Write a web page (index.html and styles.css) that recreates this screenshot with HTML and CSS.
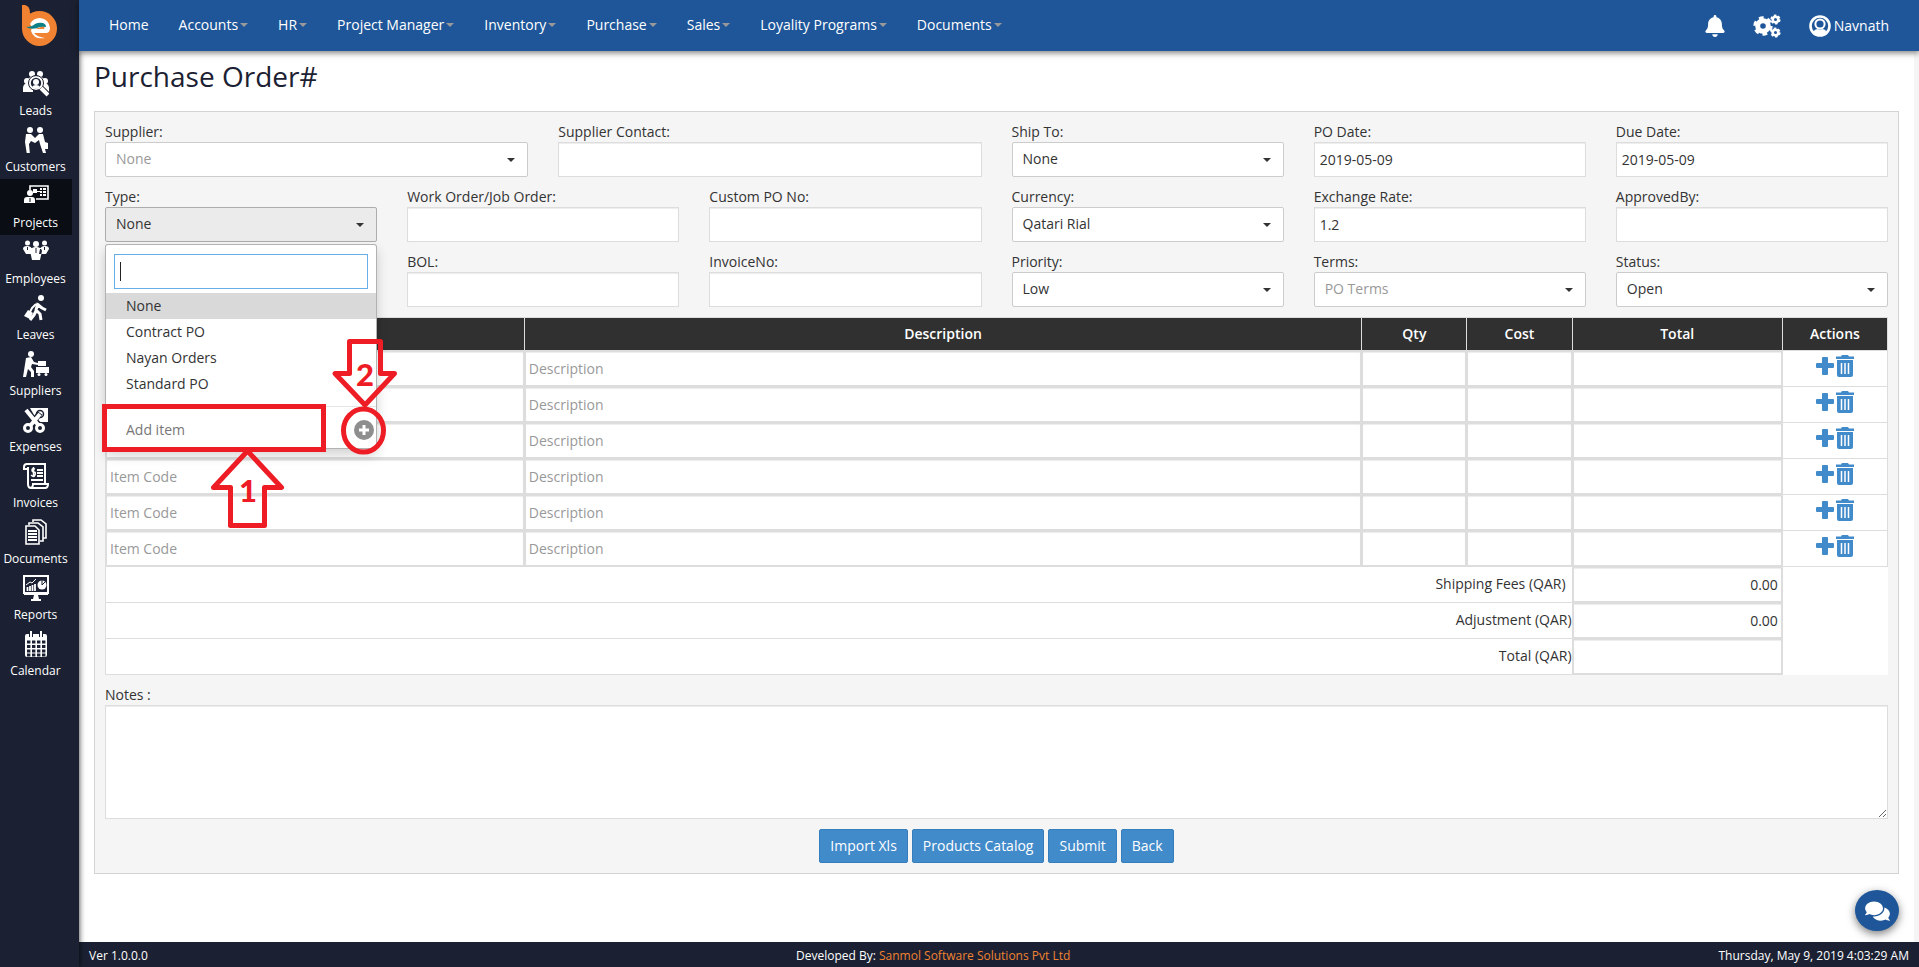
FILE: index.html
```html
<!DOCTYPE html>
<html lang="en">
<head>
<meta charset="utf-8">
<title>Purchase Order</title>
<link rel="stylesheet" href="styles.css">
</head>
<body>
<svg class="defs" aria-hidden="true">
  <symbol id="i-leads" viewBox="0 0 26 26"><g fill="currentColor"><circle cx="9" cy="3" r="3"/><circle cx="17" cy="3" r="3"/><circle cx="4" cy="10" r="3"/><circle cx="22" cy="10" r="3"/><path d="M0 21q-1-9 5-9h5v9zM16 12h6q5 1 4 9h-8zM5 9q1-4 8-3 7-1 8 3l-3 2H8z"/><circle cx="13" cy="12" r="7"/></g><circle cx="13" cy="12" r="7.500" fill="none" stroke="#1b2132" stroke-width="1"/><circle cx="13" cy="12" r="5.200" fill="#1b2132"/><circle cx="13" cy="11" r="3" fill="#fff"/><path d="M9 16q1-2 4-2t4 2q-4 3-8 0" fill="#fff"/><path d="M18 17l7 7" stroke="#1b2132" stroke-width="6"/><path d="M18 17l7 7" stroke="#fff" stroke-width="4"/></symbol>
  <symbol id="i-customers" viewBox="0 0 26 26"><g fill="currentColor"><circle cx="7" cy="3" r="3"/><circle cx="17" cy="3" r="3"/><path d="M3 7h5l4 4 4-4h4l2 8 3 1v6h-3l1 4h-3l-3-9-1-4-4 3-4-2-2 3 1 11H4L2 15z"/></g></symbol>
  <symbol id="i-projects" viewBox="0 0 26 26"><path d="M7 7V3h18v13H13" fill="none" stroke="currentColor" stroke-width="1.600"/><g fill="currentColor"><circle cx="7" cy="10" r="3"/><path d="M1 20v-3q0-3 3-3h5q3 0 3 3v3zM10 6h4v4h-4zM17 5h2v2h-2zM20 5h3v2h-3zM17 8h2v2h-2zM20 8h3v2h-3zM17 11h2v2h-2zM20 11h3v2h-3zM14 8h3v1h-3z"/></g><path d="M7 15v4" stroke="#0a0d14"/></symbol>
  <symbol id="i-employees" viewBox="0 0 26 26"><g fill="currentColor"><circle cx="4.500" cy="4" r="2.500"/><circle cx="21.500" cy="4" r="2.500"/><circle cx="13" cy="5" r="3"/><path d="M0 10q0-3 4-3t5 3l1 5H3zM26 10q0-3-4-3t-5 3l-1 5h7zM7 12q1-4 6-4t6 4l-2 9H9z"/></g><path d="M13 9v5M4.500 8v3M21.500 8v3" stroke="#1b2132"/></symbol>
  <symbol id="i-leaves" viewBox="0 0 26 26"><g fill="none" stroke="currentColor" stroke-width="3" stroke-linejoin="round"><path d="M15 8l-2 7 4 4 1 6M13 16l-2 4-4 5M14 9l5 4 4 2" /><path d="M13 9l-4 4-2 4" stroke-width="2"/></g><circle cx="18" cy="3" r="3" fill="currentColor"/><path d="M5 15l5 3-3 6-6-3z" fill="currentColor"/></symbol>
  <symbol id="i-suppliers" viewBox="0 0 26 26"><g fill="currentColor"><circle cx="8" cy="3" r="3"/><path d="M3 7l5-1 3 5 4 1v2l-6-1-1 3 3 4v6H8v-5l-3-3-2 8H0zM15 10h8v5h-8zM13 16h13v6H13z"/><circle cx="16" cy="23.500" r="1.500"/><circle cx="23" cy="23.500" r="1.500"/></g></symbol>
  <symbol id="i-expenses" viewBox="0 0 26 26"><path d="M7 1h18v14H15z" fill="currentColor"/><circle cx="17" cy="7" r="3.500" fill="none" stroke="#1b2132" stroke-width="1.500"/><path d="M3 4l14 15M17 6L7 19" stroke="#1b2132" stroke-width="6"/><g fill="none" stroke="currentColor"><path d="M3 3l13 16M17 7L7 19" stroke-width="4"/><circle cx="5" cy="21" r="3.500" stroke-width="3"/><circle cx="17" cy="21" r="3.500" stroke-width="3"/></g></symbol>
  <symbol id="i-invoices" viewBox="0 0 26 26"><path d="M5 6H1V4q0-3 3-3h18v19M5 4v17q0 4 3 4M8 25h14q3 0 3-4H10q0 4-3 4" fill="none" stroke="currentColor" stroke-width="2"/><path d="M14 7h6M14 10h6M14 13h6M8 17h12" stroke="currentColor" stroke-width="2"/><path d="M12 6q-3-1-3 1t2 2 1 3-4 0M10.500 4v10" fill="none" stroke="currentColor" stroke-width="1.500"/></symbol>
  <symbol id="i-documents" viewBox="0 0 26 26"><g fill="none" stroke="currentColor" stroke-width="1.600"><path d="M3 7h9l4 4v14H3zM6 6V4h9l5 4v14h-3M10 3V1h8l5 4v14h-3"/></g><path d="M5 12h9M5 15h9M5 18h9M5 21h9" stroke="currentColor" stroke-width="2"/></symbol>
  <symbol id="i-reports" viewBox="0 0 26 26"><path d="M1 1h24v17H1z" fill="none" stroke="currentColor" stroke-width="2"/><path d="M1 17h24v3H1zM11 20h4l1 4h2v2H8v-2h2z" fill="currentColor"/><path d="M4.500 16v-4M7 16v-5M9.500 16v-6M12 16V9" stroke="currentColor" stroke-width="1.800"/><path d="M3 10l4-3 2 1 4-4" fill="none" stroke="currentColor"/><circle cx="19" cy="10" r="4.500" fill="currentColor"/><path d="M19 5v5l3-3" fill="none" stroke="#1b2132"/></symbol>
  <symbol id="i-calendar" viewBox="0 0 26 26"><path d="M4 3h18q2 0 2 2v19q0 2-2 2H4q-2 0-2-2V5q0-2 2-2z" fill="currentColor"/><path d="M8 0v6M18 0v6" stroke="#1b2132" stroke-width="4"/><path d="M8 0v6M18 0v6" stroke="currentColor" stroke-width="2"/><path d="M4 11h19M4 15.500h19M4 20h19M4 24h19" stroke="#1b2132" stroke-width="3" stroke-dasharray="3.400 1.600"/></symbol>
  <symbol id="i-bell" viewBox="0 0 448 512"><path fill="currentColor" d="M224 512c35.320 0 63.970-28.650 63.970-64H160.030c0 35.350 28.650 64 63.970 64zm215.390-149.710c-19.320-20.760-55.470-51.990-55.470-154.290 0-77.700-54.480-139.900-127.940-155.160V32c0-17.670-14.320-32-31.980-32s-31.980 14.330-31.980 32v20.840C118.560 68.100 64.080 130.300 64.080 208c0 102.300-36.150 133.530-55.470 154.290-6 6.450-8.660 14.160-8.610 21.710.11 16.400 12.980 32 32.100 32h383.800c19.120 0 32-15.600 32.100-32 .05-7.550-2.610-15.270-8.610-21.710z"/></symbol>
  <symbol id="i-cogs" viewBox="0 0 28 24"><g fill="none" stroke="currentColor"><circle cx="10" cy="12" r="5.300" stroke-width="5"/><circle cx="10" cy="12" r="8.200" stroke-width="3" stroke-dasharray="4.700 3.887"/><circle cx="22.500" cy="5.500" r="2.800" stroke-width="2.600"/><circle cx="22.500" cy="5.500" r="4.300" stroke-width="1.600" stroke-dasharray="2.500 2.003"/><circle cx="22.500" cy="18.500" r="2.800" stroke-width="2.600"/><circle cx="22.500" cy="18.500" r="4.300" stroke-width="1.600" stroke-dasharray="2.500 2.003"/></g></symbol>
  <symbol id="i-user" viewBox="0 0 22 22"><circle cx="11" cy="11" r="9.500" fill="none" stroke="currentColor" stroke-width="2.600"/><circle cx="11" cy="9" r="4.600" fill="none" stroke="currentColor" stroke-width="2"/><path d="M4 17q2-3 4.500-3 2.500 1 5 0 2.500 0 4.500 3-3 3.500-7 3.500T4 17z" fill="currentColor"/></symbol>
  <symbol id="i-comments" viewBox="0 0 576 512"><path fill="currentColor" d="M416 192c0-88.400-93.100-160-208-160S0 103.600 0 192c0 34.300 14.100 65.900 38 92-13.400 30.200-35.500 54.200-35.800 54.500-2.200 2.300-2.800 5.700-1.500 8.700S4.800 352 8 352c36.600 0 66.900-12.300 88.700-25 32.200 15.700 70.300 25 111.300 25 114.900 0 208-71.600 208-160zm122 220c23.900-26 38-57.700 38-92 0-66.900-53.500-124.200-129.300-148.100.9 6.600 1.300 13.300 1.300 20.100 0 105.900-107.700 192-240 192-10.800 0-21.300-.8-31.700-1.900C207.800 439.600 281.800 480 368 480c41 0 79.100-9.200 111.300-25 21.800 12.700 52.100 25 88.700 25 3.200 0 6.100-1.900 7.300-4.800 1.300-2.900.7-6.300-1.500-8.700-.3-.3-22.400-24.200-35.800-54.500z"/></symbol>
  <symbol id="i-plus" viewBox="0 0 18 20"><path d="M7 1h4q1 0 1 1v5h5q1 0 1 1v3q0 1-1 1h-5v6q0 1-1 1H7q-1 0-1-1v-6H1q-1 0-1-1V8q0-1 1-1h5V2q0-1 1-1z" fill="currentColor"/></symbol>
  <symbol id="i-trash" viewBox="0 0 18 22"><path d="M6 0h6l1 1.500h5V4H0V1.500h5zM1 5h16v15q0 2-2 2H3q-2 0-2-2z" fill="currentColor"/><path d="M5.500 8v11M9 8v11M12.500 8v11" stroke="#fff" stroke-width="1.500"/></symbol>
</svg>

<div class="app">
  <aside class="sidebar">
    <a class="logo" href="#" aria-label="Dashboard">
      <svg width="36" height="42" viewBox="0 0 36 42"><path d="M0 0h3q5 1 5 8v3l-8 12z" fill="#f08232"/><circle cx="17.500" cy="23.500" r="17.500" fill="#f08232"/><path d="M0 8v16h8V8z" fill="#f08232"/><path d="M8 19q3-6 10-6 9 1 10 10 0 4-3 5H12q3 4 11 5-11 2-14-7l1-4z" fill="#fff"/><path d="M13 24h9q1-1 0-3l-9 3z" fill="#f08232"/><path d="M4 22q6 0 9-3 4-2 8-1 3 1 3 4-5-1-9 1-6 2-11-1z" fill="#0d7f86"/></svg>
    </a>
    <nav class="side-nav">
      <a class="side-link" href="#"><svg class="side-icon"><use href="#i-leads"/></svg>Leads</a>
      <a class="side-link" href="#"><svg class="side-icon"><use href="#i-customers"/></svg>Customers</a>
      <a class="side-link active" href="#"><svg class="side-icon"><use href="#i-projects"/></svg>Projects</a>
      <a class="side-link" href="#"><svg class="side-icon"><use href="#i-employees"/></svg>Employees</a>
      <a class="side-link" href="#"><svg class="side-icon"><use href="#i-leaves"/></svg>Leaves</a>
      <a class="side-link" href="#"><svg class="side-icon"><use href="#i-suppliers"/></svg>Suppliers</a>
      <a class="side-link" href="#"><svg class="side-icon"><use href="#i-expenses"/></svg>Expenses</a>
      <a class="side-link" href="#"><svg class="side-icon"><use href="#i-invoices"/></svg>Invoices</a>
      <a class="side-link" href="#"><svg class="side-icon"><use href="#i-documents"/></svg>Documents</a>
      <a class="side-link" href="#"><svg class="side-icon"><use href="#i-reports"/></svg>Reports</a>
      <a class="side-link" href="#"><svg class="side-icon"><use href="#i-calendar"/></svg>Calendar</a>
    </nav>
  </aside>

  <div class="main">
    <header class="topbar">
      <nav class="top-nav">
        <a href="#">Home</a>
        <a class="has-menu" href="#">Accounts</a>
        <a class="has-menu" href="#">HR</a>
        <a class="has-menu" href="#">Project Manager</a>
        <a class="has-menu" href="#">Inventory</a>
        <a class="has-menu" href="#">Purchase</a>
        <a class="has-menu" href="#">Sales</a>
        <a class="has-menu" href="#">Loyality Programs</a>
        <a class="has-menu" href="#">Documents</a>
      </nav>
      <div class="top-tools">
        <button class="tool" type="button" aria-label="Notifications"><svg width="20" height="22"><use href="#i-bell"/></svg></button>
        <button class="tool" type="button" aria-label="Settings"><svg width="28" height="24"><use href="#i-cogs"/></svg></button>
        <button class="tool" type="button"><svg width="22" height="22"><use href="#i-user"/></svg>Navnath</button>
      </div>
    </header>

    <main class="content">
      <h1>Purchase Order#</h1>
      <form class="panel">
        <div class="fields">
          <div class="field wide"><label for="supplier">Supplier:</label><span class="select"><select id="supplier" class="muted"><option>None</option></select></span></div>
          <div class="field wide"><label for="contact">Supplier Contact:</label><input id="contact" type="text"></div>
          <div class="field"><label for="ship">Ship To:</label><span class="select"><select id="ship"><option>None</option></select></span></div>
          <div class="field"><label for="podate">PO Date:</label><input id="podate" type="text" value="2019-05-09"></div>
          <div class="field"><label for="duedate">Due Date:</label><input id="duedate" type="text" value="2019-05-09"></div>

          <div class="field type-field"><label for="type">Type:</label><span class="select"><select id="type" class="open"><option>None</option></select></span>
            <div class="menu">
              <div class="menu-search"><input type="text" aria-label="Search"></div>
              <ul class="menu-list" role="listbox">
                <li class="menu-item selected" role="option" aria-selected="true">None</li>
                <li class="menu-item" role="option">Contract PO</li>
                <li class="menu-item" role="option">Nayan Orders</li>
                <li class="menu-item" role="option">Standard PO</li>
              </ul>
              <div class="menu-add">
                <input type="text" placeholder="Add item" aria-label="Add item">
                <button type="button" aria-label="Add"><svg width="20" height="20" viewBox="0 0 20 20"><circle cx="10" cy="10" r="10" fill="#8e8e8e"/><path d="M10 5v10M5 10h10" stroke="#fff" stroke-width="3"/></svg></button>
              </div>
            </div>
            <svg class="notes-overlay" width="310" height="200" viewBox="95 334 310 200" aria-hidden="true">
              <g fill="none" stroke="#ee1c25" stroke-width="5" stroke-linejoin="round">
                <path d="M104.500 406.500h219v43h-219z" stroke-linejoin="miter"/>
                <path d="M247.500 451l34 36.500h-17v38h-34v-38h-17z"/>
                <path d="M349.500 341.500h31v32h14l-29.500 31.500-30-31.500h14.500z"/>
                <ellipse cx="363.500" cy="430.500" rx="20" ry="21.500"/>
              </g>
              <text class="mark" x="248" y="502">1</text>
              <text class="mark" x="365" y="386">2</text>
            </svg>
          </div>
          <div class="field"><label for="work">Work Order/Job Order:</label><input id="work" type="text"></div>
          <div class="field"><label for="custom">Custom PO No:</label><input id="custom" type="text"></div>
          <div class="field"><label for="currency">Currency:</label><span class="select"><select id="currency"><option>Qatari Rial</option></select></span></div>
          <div class="field"><label for="rate">Exchange Rate:</label><input id="rate" type="text" value="1.2"></div>
          <div class="field"><label for="approved">ApprovedBy:</label><input id="approved" type="text"></div>

          <div class="field bare"><span class="select"><select aria-label="Project"><option></option></select></span></div>
          <div class="field"><label for="bol">BOL:</label><input id="bol" type="text"></div>
          <div class="field"><label for="invoice">InvoiceNo:</label><input id="invoice" type="text"></div>
          <div class="field"><label for="priority">Priority:</label><span class="select"><select id="priority"><option>Low</option></select></span></div>
          <div class="field"><label for="terms">Terms:</label><span class="select"><select id="terms" class="muted"><option>PO Terms</option></select></span></div>
          <div class="field"><label for="status">Status:</label><span class="select"><select id="status"><option>Open</option></select></span></div>
        </div>

        <table class="items">
          <colgroup><col class="c4"><col class="c8"><col class="c1"><col class="c1"><col class="c2"><col class="c1"></colgroup>
          <thead><tr><th>Item Code</th><th>Description</th><th>Qty</th><th>Cost</th><th>Total</th><th>Actions</th></tr></thead>
          <tbody>
            <tr><td><input placeholder="Item Code" aria-label="Item Code"></td><td><input placeholder="Description" aria-label="Description"></td><td><input aria-label="Qty"></td><td><input aria-label="Cost"></td><td><input aria-label="Total"></td><td class="actions"><div><button type="button" aria-label="Add row"><svg width="18" height="20"><use href="#i-plus"/></svg></button><button type="button" aria-label="Delete row"><svg width="18" height="22"><use href="#i-trash"/></svg></button></div></td></tr>
            <tr><td><input placeholder="Item Code" aria-label="Item Code"></td><td><input placeholder="Description" aria-label="Description"></td><td><input aria-label="Qty"></td><td><input aria-label="Cost"></td><td><input aria-label="Total"></td><td class="actions"><div><button type="button" aria-label="Add row"><svg width="18" height="20"><use href="#i-plus"/></svg></button><button type="button" aria-label="Delete row"><svg width="18" height="22"><use href="#i-trash"/></svg></button></div></td></tr>
            <tr><td><input placeholder="Item Code" aria-label="Item Code"></td><td><input placeholder="Description" aria-label="Description"></td><td><input aria-label="Qty"></td><td><input aria-label="Cost"></td><td><input aria-label="Total"></td><td class="actions"><div><button type="button" aria-label="Add row"><svg width="18" height="20"><use href="#i-plus"/></svg></button><button type="button" aria-label="Delete row"><svg width="18" height="22"><use href="#i-trash"/></svg></button></div></td></tr>
            <tr><td><input placeholder="Item Code" aria-label="Item Code"></td><td><input placeholder="Description" aria-label="Description"></td><td><input aria-label="Qty"></td><td><input aria-label="Cost"></td><td><input aria-label="Total"></td><td class="actions"><div><button type="button" aria-label="Add row"><svg width="18" height="20"><use href="#i-plus"/></svg></button><button type="button" aria-label="Delete row"><svg width="18" height="22"><use href="#i-trash"/></svg></button></div></td></tr>
            <tr><td><input placeholder="Item Code" aria-label="Item Code"></td><td><input placeholder="Description" aria-label="Description"></td><td><input aria-label="Qty"></td><td><input aria-label="Cost"></td><td><input aria-label="Total"></td><td class="actions"><div><button type="button" aria-label="Add row"><svg width="18" height="20"><use href="#i-plus"/></svg></button><button type="button" aria-label="Delete row"><svg width="18" height="22"><use href="#i-trash"/></svg></button></div></td></tr>
            <tr><td><input placeholder="Item Code" aria-label="Item Code"></td><td><input placeholder="Description" aria-label="Description"></td><td><input aria-label="Qty"></td><td><input aria-label="Cost"></td><td><input aria-label="Total"></td><td class="actions"><div><button type="button" aria-label="Add row"><svg width="18" height="20"><use href="#i-plus"/></svg></button><button type="button" aria-label="Delete row"><svg width="18" height="22"><use href="#i-trash"/></svg></button></div></td></tr>
          </tbody>
          <tfoot>
            <tr><td class="sum spaced" colspan="4"><label for="fees">Shipping Fees (QAR)</label></td><td><input id="fees" class="num" value="0.00"></td><td class="blank" rowspan="3"></td></tr>
            <tr><td class="sum" colspan="4"><label for="adjust">Adjustment (QAR)</label></td><td><input id="adjust" class="num" value="0.00"></td></tr>
            <tr><td class="sum" colspan="4"><label for="total">Total (QAR)</label></td><td><input id="total" class="num"></td></tr>
          </tfoot>
        </table>

        <div class="notes"><label for="notes">Notes :</label><textarea id="notes"></textarea></div>

        <div class="buttons">
          <button class="btn" type="button">Import Xls</button>
          <button class="btn" type="button">Products Catalog</button>
          <button class="btn" type="button">Submit</button>
          <button class="btn" type="button">Back</button>
        </div>
      </form>
    </main>

    <footer class="footer">
      <span>Ver 1.0.0.0</span>
      <span>Developed By: <a href="#">Sanmol Software Solutions Pvt Ltd</a></span>
      <span>Thursday, May 9, 2019 4:03:29 AM</span>
    </footer>
  </div>
</div>
<button class="chat" type="button" aria-label="Chat"><svg width="25" height="22"><use href="#i-comments"/></svg></button>
</body>
</html>
```
FILE: styles.css
```css
* { box-sizing: border-box; }

body {
  margin: 0;
  font-family: "Open Sans", "Liberation Sans", sans-serif;
  font-size: 14px;
  line-height: 20px;
  color: #333;
  background: #fff;
}

input, select, textarea, button { font: inherit; color: inherit; margin: 0; }
button { cursor: pointer; }
svg { display: block; }
a { text-decoration: none; color: inherit; }
.defs { position: absolute; width: 0; height: 0; }

.app { display: flex; min-height: 100vh; }

/* Sidebar */
.sidebar {
  position: relative;
  z-index: 2;
  flex: none;
  width: 79px;
  background: #1b2132;
  color: #fff;
  box-shadow: 0 0 6px rgba(0, 0, 0, .8);
}
.logo { display: block; height: 67px; padding: 5px 22px; }
.side-nav { width: 72px; }
.side-link {
  display: flex;
  flex-direction: column;
  align-items: center;
  gap: 6px;
  height: 56px;
  padding: 4px 1px 0 0;
  font-size: 12px;
  line-height: 16px;
}
.side-link.active { background: #0a0d14; }
.side-icon { width: 26px; height: 26px; }

/* Top bar */
.main { flex: 1; min-width: 0; display: flex; flex-direction: column; }
.topbar {
  position: relative;
  z-index: 3;
  display: flex;
  align-items: center;
  justify-content: space-between;
  height: 51px;
  padding: 0 30px;
  background: #1e5699;
  color: #fff;
  box-shadow: 0 2px 6px rgba(0, 0, 0, .5);
}
.top-nav { display: flex; gap: 30px; padding-bottom: 2px; }
.has-menu { display: flex; align-items: center; gap: 2px; }
.has-menu::after {
  content: "";
  border: 4px solid transparent;
  border-top-color: #999;
  border-bottom: 0;
}
.top-tools { display: flex; align-items: center; gap: 28px; }
.tool {
  display: flex;
  align-items: center;
  gap: 3px;
  padding: 0;
  border: 0;
  background: none;
}

/* Content */
.content {
  flex: 1;
  padding: 9px 15px 15px;
  border-right: 5px solid #f5f5f5;
}
h1 {
  margin: 0 0 19px;
  font-size: 28px;
  line-height: 32px;
  font-weight: 500;
  color: #1b2132;
}
.panel {
  padding: 10px;
  border: 1px solid #d3d3d3;
  background: #f5f5f5;
}
.fields {
  display: grid;
  grid-template-columns: repeat(12, minmax(0, 1fr));
  gap: 10px 30px;
}
.field { grid-column: span 2; display: flex; flex-direction: column; }
.field.wide { grid-column: span 3; }
.bare { justify-content: flex-end; }
.field > input, .notes textarea, .items input {
  width: 100%;
  height: 35px;
  padding: 4px 5px;
  border: 1px solid #ddd;
  border-radius: 0;
  background: #fff;
  box-shadow: inset 0 1px 1px rgba(0, 0, 0, .075);
  outline: 0;
}
.select { position: relative; display: block; }
.select select {
  display: block;
  width: 100%;
  height: 35px;
  padding: 0 30px 2px 10px;
  border: 1px solid #ccc;
  border-radius: 2px;
  background: #fff;
  appearance: none;
}
.select::after {
  content: "";
  position: absolute;
  top: 16px;
  right: 13px;
  border: 4px solid transparent;
  border-top-color: #333;
  border-bottom: 0;
  pointer-events: none;
}
.select .muted { color: #999; }
.select .open { background: #ebebeb; border-color: #adadad; }
::placeholder { color: #999; opacity: 1; }

/* Open drop-down */
.type-field { position: relative; }
.menu {
  position: absolute;
  z-index: 5;
  top: 57px;
  left: 0;
  width: 100%;
  padding-top: 9px;
  border: 1px solid rgba(0, 0, 0, .3);
  border-radius: 3px;
  background: #fff;
  box-shadow: 0 6px 12px rgba(0, 0, 0, .175);
}
.menu-search { position: relative; padding: 0 8px 4px; }
.menu-search input {
  display: block;
  width: 100%;
  height: 35px;
  padding: 4px 5px;
  border: 1px solid #66afe9;
}
.menu-search::after {
  content: "";
  position: absolute;
  left: 14px;
  top: 8px;
  width: 1px;
  height: 19px;
  background: #222;
}
.menu-list { margin: 0; padding: 0; list-style: none; }
.menu-item { padding: 3px 20px; }
.menu-item.selected { background: #d9d9d9; }
.menu-add {
  display: flex;
  align-items: center;
  justify-content: space-between;
  margin-top: 9px;
  height: 42px;
  padding: 4px 2px 0 20px;
  border-top: 1px solid #e5e5e5;
}
.menu-add input { width: 160px; padding: 0; border: 0; background: none; }
.menu-add ::placeholder { color: #777; }
.menu-add button { padding: 0; border: 0; background: none; }
.notes-overlay {
  position: absolute;
  z-index: 6;
  top: 147px;
  left: -10px;
  pointer-events: none;
}
.mark {
  font-family: Lato, sans-serif;
  font-size: 31px;
  font-weight: 900;
  fill: #ee1c25;
  text-anchor: middle;
}

/* Line items */
.items {
  width: 100%;
  margin-top: 10px;
  table-layout: fixed;
  border-collapse: collapse;
  background: #fff;
}
.c4 { width: 23.5%; }
.c8 { width: 47%; }
.c1 { width: 5.9%; }
.c2 { width: 11.8%; }
.items th {
  padding: 6px 0;
  border: 1px solid #ddd;
  background: #303030;
  color: #fff;
  font-weight: 600;
}
.items td { padding: 0; border: 1px solid #ddd; }
.items input { display: block; padding: 4px 3px; }
.items .num { text-align: right; }
.actions div {
  display: flex;
  justify-content: center;
  align-items: center;
  gap: 2px;
  height: 30px;
  margin-bottom: 5px;
}
.actions button { padding: 0; border: 0; background: none; color: #428bca; }
.items .sum { padding-bottom: 2px; text-align: right; }
.items .spaced { padding-right: 6px; }
.items .blank { border-right: 0; border-bottom: 0; }

/* Notes and buttons */
.notes { margin-top: 10px; }
.notes label { display: block; }
.notes textarea { display: block; height: 114px; }
.buttons { margin-top: 10px; display: flex; justify-content: center; gap: 4px; }
.btn {
  height: 34px;
  padding: 0 10px;
  border: 1px solid #357ebd;
  border-radius: 2px;
  background: #428bca;
  color: #fff;
}

.footer {
  display: flex;
  justify-content: space-between;
  align-items: center;
  height: 25px;
  padding: 2px 10px 0;
  background: #1b2132;
  color: #fff;
  font-size: 12px;
  line-height: 16px;
}
.footer a { color: #f08232; }

.chat {
  position: fixed;
  z-index: 4;
  right: 20px;
  bottom: 36px;
  display: flex;
  align-items: center;
  justify-content: center;
  width: 44px;
  height: 41px;
  padding: 0;
  border: 0;
  border-radius: 50%;
  background: #1e5699;
  color: #fff;
  box-shadow: 0 3px 8px rgba(0, 0, 0, .5);
}
```
